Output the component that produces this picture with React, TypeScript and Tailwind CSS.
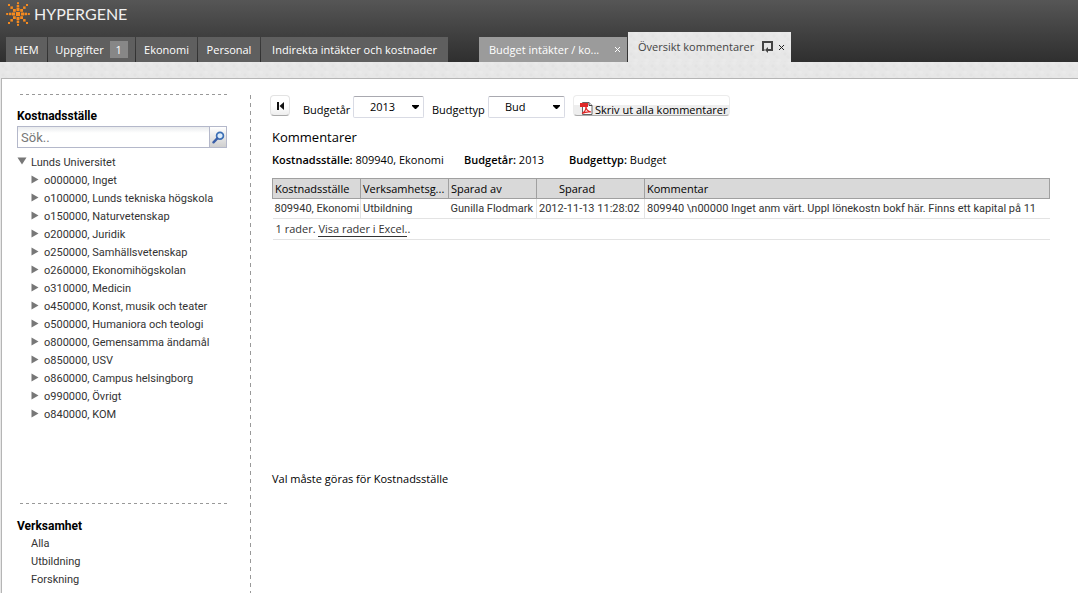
import type { ReactNode } from "react";

const sunDots: [number, number, number][] = [
  [9.9, 9.9, 4.2],
  [10.5, 6, 3], [10.7, 3, 2.5], [11, 0.2, 2],
  [10.5, 15, 3], [10.7, 18.5, 2.5], [11, 21.8, 2],
  [6, 10.5, 3], [3, 10.7, 2.5], [0.2, 11, 2],
  [15, 10.5, 3], [18.5, 10.7, 2.5], [21.8, 11, 2],
  [7, 7, 2.8], [4.4, 4.4, 2.5], [2, 2, 2],
  [14.2, 7, 2.8], [17.1, 4.4, 2.5], [20, 2, 2],
  [7, 14.2, 2.8], [4.4, 17.1, 2.5], [2, 20, 2],
  [14.2, 14.2, 2.8], [17.1, 17.1, 2.5], [20, 20, 2],
];

const units = [
  "o000000, Inget",
  "o100000, Lunds tekniska högskola",
  "o150000, Naturvetenskap",
  "o200000, Juridik",
  "o250000, Samhällsvetenskap",
  "o260000, Ekonomihögskolan",
  "o310000, Medicin",
  "o450000, Konst, musik och teater",
  "o500000, Humaniora och teologi",
  "o800000, Gemensamma ändamål",
  "o850000, USV",
  "o860000, Campus helsingborg",
  "o990000, Övrigt",
  "o840000, KOM",
];

const texture =
  "bg-[#e7e7e7] bg-[radial-gradient(circle_at_3px_4px,#e3e3e3_0_1px,transparent_2px),radial-gradient(circle_at_8px_1px,#eaeaea_0_1px,transparent_3px),radial-gradient(circle_at_6px_7px,#e4e4e4_0_1px,transparent_2px)] bg-size-[11px_9px]";

function NavTab({ width, children }: { width: string; children: ReactNode }) {
  return (
    <button type="button" className={`${width} flex h-[25px] items-center justify-center bg-[#5f5f5f] whitespace-nowrap text-white`}>
      {children}
    </button>
  );
}

function Close({ label, color }: { label: string; color: string }) {
  return (
    <button type="button" aria-label={label} className={color}>
      <svg width="5" height="5" viewBox="0 0 5 5" className="block" shapeRendering="crispEdges">
        <path d="M0 0h1v1H0zM4 0h1v1H4zM1 1h1v1H1zM3 1h1v1H3zM2 2h1v1H2zM1 3h1v1H1zM3 3h1v1H3zM0 4h1v1H0zM4 4h1v1H4z" fill="currentColor" />
      </svg>
    </button>
  );
}

function DropDown({ id, options, width }: { id: string; options: string[]; width: string }) {
  return (
    <div className={`${width} relative h-[22px]`}>
      <select
        id={id}
        className="h-full w-full appearance-none rounded-xs border border-[#d9dbe4] border-t-[#a9a9b0] bg-white pl-4 text-black"
      >
        {options.map((o) => (
          <option key={o}>{o}</option>
        ))}
      </select>
      <svg width="7" height="4" viewBox="0 0 7 4" className="pointer-events-none absolute top-[9px] right-[5px]">
        <path d="M0 0h7v1L4 4H3L0 1z" fill="#000" />
      </svg>
    </div>
  );
}

function DashedRule() {
  return <div className="ml-[3px] h-px bg-[repeating-linear-gradient(90deg,#999_0_3px,transparent_3px_6px)]" />;
}

export default function App() {
  return (
    <div className="flex min-h-screen flex-col overflow-hidden bg-white font-['Open_Sans',sans-serif] text-[11px] leading-[18px] text-[#333]">
      <header className="flex h-[62px] flex-col justify-between bg-linear-to-b from-[#565656] to-[#2f2f2f]">
        <a href="#" className="flex items-center gap-1 self-start pt-0.5 pl-1.5">
          <svg width="24" height="24" viewBox="0 0 24 24">
            {sunDots.map(([x, y, s]) => (
              <rect key={`${x}-${y}`} x={x} y={y} width={s} height={s} fill="#f58a1f" />
            ))}
          </svg>
          <span className="font-['Lato',sans-serif] text-base leading-6 text-[#f0f0f0]">HYPERGENE</span>
        </a>
        <nav className="flex items-end pl-1.5">
          <div className="flex gap-px">
            <NavTab width="w-[41px]">HEM</NavTab>
            <NavTab width="w-[87px]">
              Uppgifter
              <span className="ml-1.5 flex h-[17px] w-[18px] items-center justify-center bg-[#878787]">1</span>
            </NavTab>
            <NavTab width="w-[61px]">Ekonomi</NavTab>
            <NavTab width="w-[62px]">Personal</NavTab>
            <NavTab width="w-[187px]">Indirekta intäkter och kostnader</NavTab>
          </div>
          <div className="ml-[31px] flex items-end gap-px">
            <div className="flex h-[25px] w-[148px] items-center justify-between bg-[#9b9b9b] pr-[7px] pl-2.5 text-white">
              <button type="button" className="whitespace-nowrap">Budget intäkter / ko...</button>
              <Close label="Stäng Budget intäkter" color="text-white" />
            </div>
            <div className={`${texture} flex h-[30px] w-[163px] items-center pr-[7px] pl-2.5 text-[#444]`}>
              <button type="button" className="flex-1 text-left whitespace-nowrap">Översikt kommentarer</button>
              <button type="button" aria-label="Öppna i eget fönster" className="mr-1.5">
                <svg width="11" height="12" viewBox="0 0 11 12" className="block">
                  <path d="M2.500 9H1V1h9v8H6" fill="none" stroke="#444" strokeWidth="2" />
                  <path d="M3 9l3-3v6z" fill="#444" />
                </svg>
              </button>
              <Close label="Stäng Översikt kommentarer" color="text-[#222]" />
            </div>
          </div>
        </nav>
      </header>
      <div className={`${texture} flex flex-1 flex-col pt-4 pl-px`}>
        <div className="flex flex-1 border-t border-l border-[#b5b5b5] bg-white">
          <aside className="w-[225px] shrink-0 pt-[15px] pl-[15px] font-['Roboto',sans-serif]">
            <DashedRule />
            <h2 className="mt-3 text-xs leading-[18px] font-bold text-black">Kostnadsställe</h2>
            <form className="mt-px flex h-[22px] w-[210px] border border-[#b4b8ca]" onSubmit={(e) => e.preventDefault()}>
              <input
                type="text"
                aria-label="Sök kostnadsställe"
                placeholder="Sök.."
                className="min-w-0 flex-1 bg-linear-to-b from-[#e9ebed] to-white to-30% pt-0.5 pl-[3px] text-[13px] placeholder:text-[#777]"
              />
              <button type="submit" aria-label="Sök" className="flex w-[17px] items-center justify-center border-l border-[#b4b8ca] bg-linear-to-b from-white to-[#cfcfcf]">
                <svg width="13" height="13" viewBox="0 0 13 13">
                  <circle cx="8" cy="4.8" r="3.4" fill="#dcecfa" stroke="#3c6fb5" strokeWidth="1.7" />
                  <path d="M5.3 7.4L1.5 11.3" stroke="#3a5fa8" strokeWidth="2.4" strokeLinecap="round" />
                </svg>
              </button>
            </form>
            <ul className="mt-1.5 h-[349px]">
              <li>
                <button type="button" className="flex items-center gap-1 whitespace-nowrap">
                  <svg width="10" height="8" viewBox="0 0 10 8" className="mb-1">
                    <path d="M0.5 0.5h9L5 7.5z" fill="#777" />
                  </svg>
                  Lunds Universitet
                </button>
                <ul className="pl-3.5">
                  {units.map((u) => (
                    <li key={u}>
                      <button type="button" className="flex items-center gap-[5px] whitespace-nowrap">
                        <svg width="8" height="9" viewBox="0 0 8 9" className="mb-1">
                          <path d="M0.5 0.5v8L7.5 4.5z" fill="#777" />
                        </svg>
                        {u}
                      </button>
                    </li>
                  ))}
                </ul>
              </li>
            </ul>
            <DashedRule />
            <h2 className="mt-[13px] text-xs leading-[18px] font-bold text-black">Verksamhet</h2>
            <ul className="pl-3.5">
              {["Alla", "Utbildning", "Forskning"].map((v) => (
                <li key={v}>
                  <button type="button" className="block">{v}</button>
                </li>
              ))}
            </ul>
          </aside>
          <div className="mt-4 ml-[23px] w-px shrink-0 bg-[repeating-linear-gradient(180deg,#999_0_4px,transparent_4px_8px)]" />
          <main className="min-w-0 flex-1 pt-4 pr-7 pl-[21px] text-black">
            <div className="flex items-center">
              <button
                type="button"
                aria-label="Första"
                className="-ml-0.5 flex h-[21px] w-5 items-center justify-center self-start rounded-sm border border-[#e3e3e3] border-b-[#aaa] bg-linear-to-b from-white from-50% to-[#eee]"
              >
                <svg width="7" height="8" viewBox="0 0 7 8">
                  <path d="M0 0h2v8H0zM7 0v8L2.5 4z" fill="#111" />
                </svg>
              </button>
              <label htmlFor="year" className="ml-[13px] w-[50px] pt-1.5">Budgetår</label>
              <DropDown id="year" width="w-[71px]" options={["2013", "2012"]} />
              <label htmlFor="kind" className="ml-2 w-14 pt-1.5">Budgettyp</label>
              <DropDown id="kind" width="w-[77px]" options={["Bud", "Prognos"]} />
              <button
                type="button"
                className="ml-2 flex h-[21px] w-[157px] items-end gap-0.5 self-start rounded-sm border border-[#ececec] border-b-[#aaa] bg-linear-to-b from-white from-50% to-[#eee] to-50% pl-1.5 whitespace-nowrap"
              >
                <svg width="13" height="13" viewBox="0 0 13 13">
                  <path d="M2.5 0.5h6.500l3 3v9h-9.500z" fill="#fff" stroke="#666" />
                  <path d="M9 0.500v3h3" fill="#ddd" stroke="#444" />
                  <path d="M0 1h8v4H0z" fill="#e02828" />
                  <path d="M2 11.500c2-1 4-4 4-7 0 3 2 5 5 5.500-3-.5-6 0-9 1.500z" fill="none" stroke="#e02828" strokeWidth="1.200" />
                </svg>
                <span className="h-3.5 leading-[18px]">Skriv ut alla kommentarer</span>
              </button>
            </div>
            <h1 className="mt-2 text-[13px] leading-5">Kommentarer</h1>
            <div className="mt-1 flex h-[18px] whitespace-nowrap">
              <p className="w-48"><b className="font-semibold">Kostnadsställe:</b> 809940, Ekonomi</p>
              <p className="w-[105px]"><b className="font-semibold">Budgetår:</b> 2013</p>
              <p><b className="font-semibold">Budgettyp:</b> Budget</p>
            </div>
            <table className="mt-[9px] w-full table-fixed border-collapse text-left whitespace-nowrap">
              <colgroup>
                <col className="w-[88px]" />
                <col className="w-[88px]" />
                <col className="w-[88px]" />
                <col className="w-[108px]" />
                <col />
              </colgroup>
              <thead>
                <tr className="h-5 border border-[#a0a0a0] bg-[#d9d9d9]">
                  <th className="border border-[#a0a0a0] px-0.5 font-normal">Kostnadsställe</th>
                  <th className="border border-[#a0a0a0] px-0.5 font-normal">Verksamhetsg...</th>
                  <th className="border border-[#a0a0a0] px-0.5 font-normal">Sparad av</th>
                  <th className="border border-[#a0a0a0] pl-[22px] font-normal">Sparad</th>
                  <th className="border border-[#a0a0a0] px-0.5 font-normal">Kommentar</th>
                </tr>
              </thead>
              <tbody className="font-['Roboto',sans-serif] text-[#333]">
                <tr className="h-5 border-b border-[#e3e3e3]">
                  <td className="border-r border-[#e3e3e3] px-0.5">809940, Ekonomi</td>
                  <td className="px-0.5">Utbildning</td>
                  <td className="px-0.5">Gunilla Flodmark</td>
                  <td className="border-x border-[#e3e3e3] px-0.5">2012-11-13 11:28:02</td>
                  <td className="px-0.5">809940 \n00000 Inget anm värt. Uppl lönekostn bokf här. Finns ett kapital på 11</td>
                </tr>
              </tbody>
              <tfoot className="text-[#333]">
                <tr className="h-[21px] border-b border-[#e3e3e3]">
                  <td colSpan={5} className="px-[3px]">
                    1 rader. <a href="#" className="border-b border-[#333]">Visa rader i Excel.</a>.
                  </td>
                </tr>
              </tfoot>
            </table>
            <p className="mt-[230px]">Val måste göras för Kostnadsställe</p>
          </main>
        </div>
      </div>
    </div>
  );
}
